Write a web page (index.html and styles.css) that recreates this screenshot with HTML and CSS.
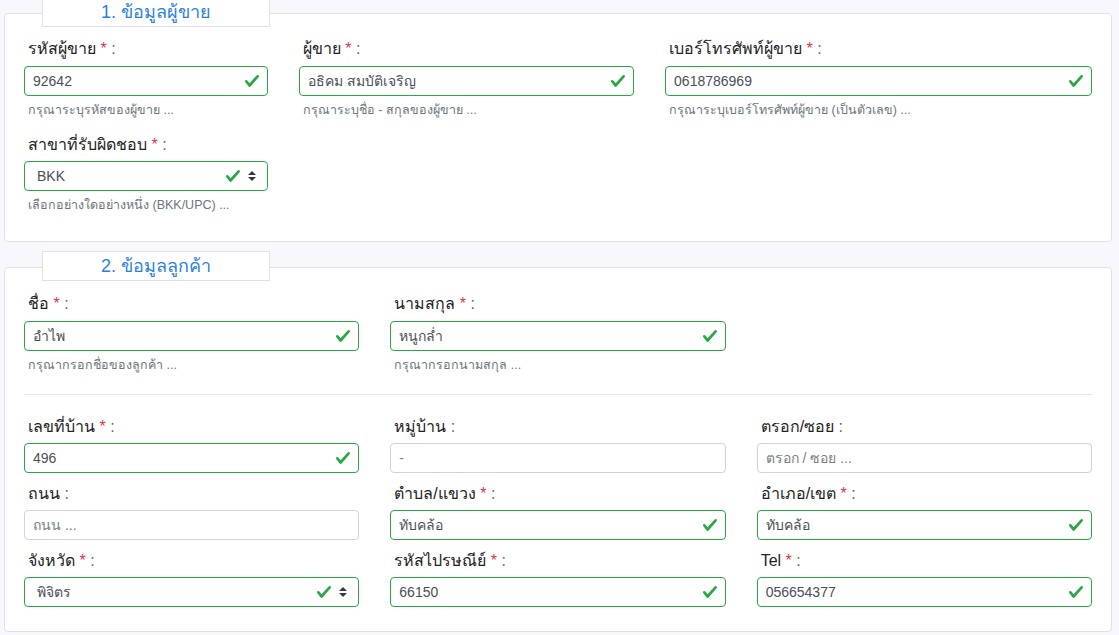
FILE: index.html
```html
<!DOCTYPE html>
<html lang="th">
<head>
<meta charset="utf-8">
<title>ข้อมูลผู้ขาย</title>
<link rel="stylesheet" href="styles.css">
</head>
<body>
<div class="page">
  <section class="card card-seller">
    <div class="legend">1. ข้อมูลผู้ขาย</div>
    <div class="grid">
      <div class="group top span3">
        <label class="lbl">รหัสผู้ขาย <span class="req">*</span> <span class="colon">:</span></label>
        <div class="field valid"><span class="val">92642</span><svg class="ok" viewBox="0 0 8 8"><path d="M2.3 6.73L.6 4.53c-.4-1.04.46-1.4 1.1-.8l1.1 1.4 3.4-3.8c.6-.63 1.6-.27 1.2.7l-4 4.6c-.43.5-.8.4-1.1.1z"/></svg></div>
        <div class="help">กรุณาระบุรหัสของผู้ขาย ...</div>
      </div>
      <div class="group top span4">
        <label class="lbl">ผู้ขาย <span class="req">*</span> <span class="colon">:</span></label>
        <div class="field valid"><span class="val">อธิคม สมบัติเจริญ</span><svg class="ok" viewBox="0 0 8 8"><path d="M2.3 6.73L.6 4.53c-.4-1.04.46-1.4 1.1-.8l1.1 1.4 3.4-3.8c.6-.63 1.6-.27 1.2.7l-4 4.6c-.43.5-.8.4-1.1.1z"/></svg></div>
        <div class="help">กรุณาระบุชื่อ - สกุลของผู้ขาย ...</div>
      </div>
      <div class="group top span5">
        <label class="lbl">เบอร์โทรศัพท์ผู้ขาย <span class="req">*</span> <span class="colon">:</span></label>
        <div class="field valid"><span class="val">0618786969</span><svg class="ok" viewBox="0 0 8 8"><path d="M2.3 6.73L.6 4.53c-.4-1.04.46-1.4 1.1-.8l1.1 1.4 3.4-3.8c.6-.63 1.6-.27 1.2.7l-4 4.6c-.43.5-.8.4-1.1.1z"/></svg></div>
        <div class="help">กรุณาระบุเบอร์โทรศัพท์ผู้ขาย (เป็นตัวเลข) ...</div>
      </div>
      <div class="group span3">
        <label class="lbl">สาขาที่รับผิดชอบ <span class="req">*</span> <span class="colon">:</span></label>
        <div class="field valid select"><span class="val">BKK</span><svg class="ok" viewBox="0 0 8 8"><path d="M2.3 6.73L.6 4.53c-.4-1.04.46-1.4 1.1-.8l1.1 1.4 3.4-3.8c.6-.63 1.6-.27 1.2.7l-4 4.6c-.43.5-.8.4-1.1.1z"/></svg><svg class="arrows" viewBox="0 0 4 5"><path d="M2 0L0 2h4zm0 5L0 3h4z"/></svg></div>
        <div class="help">เลือกอย่างใดอย่างหนึ่ง (BKK/UPC) ...</div>
      </div>
    </div>
  </section>

  <section class="card card-customer">
    <div class="legend">2. ข้อมูลลูกค้า</div>
    <div class="grid">
      <div class="group top span4">
        <label class="lbl">ชื่อ <span class="req">*</span> <span class="colon">:</span></label>
        <div class="field valid"><span class="val">อำไพ</span><svg class="ok" viewBox="0 0 8 8"><path d="M2.3 6.73L.6 4.53c-.4-1.04.46-1.4 1.1-.8l1.1 1.4 3.4-3.8c.6-.63 1.6-.27 1.2.7l-4 4.6c-.43.5-.8.4-1.1.1z"/></svg></div>
        <div class="help">กรุณากรอกชื่อของลูกค้า ...</div>
      </div>
      <div class="group top span4">
        <label class="lbl">นามสกุล <span class="req">*</span> <span class="colon">:</span></label>
        <div class="field valid"><span class="val">หนูกล่ำ</span><svg class="ok" viewBox="0 0 8 8"><path d="M2.3 6.73L.6 4.53c-.4-1.04.46-1.4 1.1-.8l1.1 1.4 3.4-3.8c.6-.63 1.6-.27 1.2.7l-4 4.6c-.43.5-.8.4-1.1.1z"/></svg></div>
        <div class="help">กรุณากรอกนามสกุล ...</div>
      </div>
    </div>
    <hr class="divider">
    <div class="grid address">
      <div class="group span4">
        <label class="lbl">เลขที่บ้าน <span class="req">*</span> <span class="colon">:</span></label>
        <div class="field valid"><span class="val">496</span><svg class="ok" viewBox="0 0 8 8"><path d="M2.3 6.73L.6 4.53c-.4-1.04.46-1.4 1.1-.8l1.1 1.4 3.4-3.8c.6-.63 1.6-.27 1.2.7l-4 4.6c-.43.5-.8.4-1.1.1z"/></svg></div>
      </div>
      <div class="group span4">
        <label class="lbl">หมู่บ้าน <span class="colon">:</span></label>
        <div class="field plain"><span class="val muted">-</span></div>
      </div>
      <div class="group span4">
        <label class="lbl">ตรอก/ซอย <span class="colon">:</span></label>
        <div class="field plain"><span class="val placeholder">ตรอก / ซอย ...</span></div>
      </div>
      <div class="group span4">
        <label class="lbl">ถนน <span class="colon">:</span></label>
        <div class="field plain"><span class="val placeholder">ถนน ...</span></div>
      </div>
      <div class="group span4">
        <label class="lbl">ตำบล/แขวง <span class="req">*</span> <span class="colon">:</span></label>
        <div class="field valid"><span class="val">ทับคล้อ</span><svg class="ok" viewBox="0 0 8 8"><path d="M2.3 6.73L.6 4.53c-.4-1.04.46-1.4 1.1-.8l1.1 1.4 3.4-3.8c.6-.63 1.6-.27 1.2.7l-4 4.6c-.43.5-.8.4-1.1.1z"/></svg></div>
      </div>
      <div class="group span4">
        <label class="lbl">อำเภอ/เขต <span class="req">*</span> <span class="colon">:</span></label>
        <div class="field valid"><span class="val">ทับคล้อ</span><svg class="ok" viewBox="0 0 8 8"><path d="M2.3 6.73L.6 4.53c-.4-1.04.46-1.4 1.1-.8l1.1 1.4 3.4-3.8c.6-.63 1.6-.27 1.2.7l-4 4.6c-.43.5-.8.4-1.1.1z"/></svg></div>
      </div>
      <div class="group span4">
        <label class="lbl">จังหวัด <span class="req">*</span> <span class="colon">:</span></label>
        <div class="field valid select"><span class="val">พิจิตร</span><svg class="ok" viewBox="0 0 8 8"><path d="M2.3 6.73L.6 4.53c-.4-1.04.46-1.4 1.1-.8l1.1 1.4 3.4-3.8c.6-.63 1.6-.27 1.2.7l-4 4.6c-.43.5-.8.4-1.1.1z"/></svg><svg class="arrows" viewBox="0 0 4 5"><path d="M2 0L0 2h4zm0 5L0 3h4z"/></svg></div>
      </div>
      <div class="group span4">
        <label class="lbl">รหัสไปรษณีย์ <span class="req">*</span> <span class="colon">:</span></label>
        <div class="field valid"><span class="val">66150</span><svg class="ok" viewBox="0 0 8 8"><path d="M2.3 6.73L.6 4.53c-.4-1.04.46-1.4 1.1-.8l1.1 1.4 3.4-3.8c.6-.63 1.6-.27 1.2.7l-4 4.6c-.43.5-.8.4-1.1.1z"/></svg></div>
      </div>
      <div class="group span4">
        <label class="lbl">Tel <span class="req">*</span> <span class="colon">:</span></label>
        <div class="field valid"><span class="val">056654377</span><svg class="ok" viewBox="0 0 8 8"><path d="M2.3 6.73L.6 4.53c-.4-1.04.46-1.4 1.1-.8l1.1 1.4 3.4-3.8c.6-.63 1.6-.27 1.2.7l-4 4.6c-.43.5-.8.4-1.1.1z"/></svg></div>
      </div>
    </div>
  </section>
</div>
</body>
</html>
```

FILE: styles.css
```css
html, body {
  margin: 0;
  padding: 0;
}

body {
  background: #f8f8fc;
  font-family: "Liberation Sans", Arial, sans-serif;
  color: #212529;
  overflow: hidden;
}

.page {
  padding: 13px 7px 0 4px;
}

.card {
  position: relative;
  background: #fff;
  border: 1px solid #dee2e6;
  border-radius: 4px;
}

.card-seller {
  padding: 24px 19px 12px;
}

.card-customer {
  margin-top: 25px;
  padding: 25px 19px 14px;
}

.legend {
  position: absolute;
  left: 37px;
  top: -17px;
  width: 226px;
  height: 28px;
  line-height: 28px;
  background: #fff;
  border: 1px solid #dee2e6;
  text-align: center;
  font-size: 18px;
  color: #2a80e4;
}

.grid {
  display: grid;
  grid-template-columns: repeat(12, 1fr);
  column-gap: 31px;
}

.span3 { grid-column: span 3; }
.span4 { grid-column: span 4; }
.span5 { grid-column: span 5; }

.card-seller .group {
  margin-bottom: 15px;
}

.address .group {
  margin-bottom: 10px;
}

.lbl {
  display: block;
  font-size: 16px;
  line-height: 22px;
  margin-bottom: 5px;
  padding-left: 4px;
  color: #222;
}

.top .lbl {
  margin-bottom: 6px;
}

.req {
  color: #dc3545;
}

.colon {
  color: #666;
}

.field {
  box-sizing: border-box;
  height: 30px;
  display: flex;
  align-items: center;
  border: 1px solid #ced4da;
  border-radius: 4px;
  padding: 0 7px 0 8px;
  font-size: 14px;
  color: #495057;
  background: #fff;
}

.field.valid {
  border-color: #28a745;
}

.field.select {
  padding: 0 11px 0 12px;
}

.val {
  flex: 1;
  white-space: nowrap;
  overflow: hidden;
}

.placeholder,
.muted {
  color: #7a8087;
}

.ok {
  width: 16px;
  height: 16px;
  flex: none;
  fill: #28a745;
}

.arrows {
  width: 8px;
  height: 10px;
  flex: none;
  margin-left: 7px;
  fill: #343a40;
}

.help {
  margin-top: 5px;
  padding-left: 4px;
  font-size: 12.5px;
  line-height: 18px;
  color: #6c757d;
}

.divider {
  border: 0;
  border-top: 1px solid #e5e5e5;
  margin: 20px 0 21px;
}
```
